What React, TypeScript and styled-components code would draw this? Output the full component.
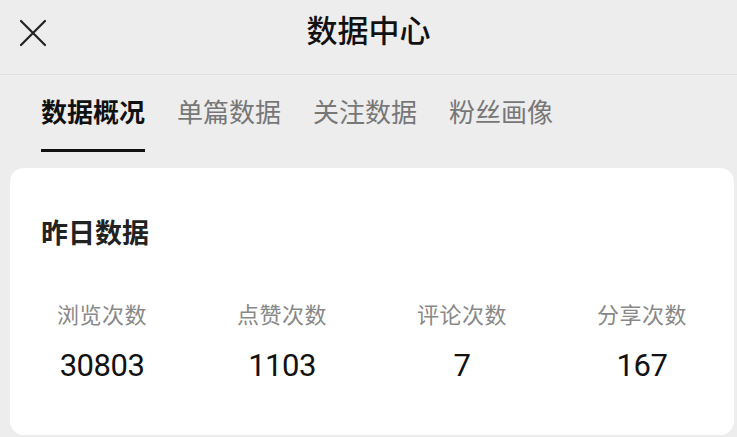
import styled, { createGlobalStyle } from 'styled-components';

const GlobalStyle = createGlobalStyle`
	html, body {
		margin: 0;
		padding: 0;
		background: #ededed;
	}
	body {
		font-family: 'Noto Sans CJK SC', 'Noto Sans', sans-serif;
		width: 737px;
		height: 437px;
		overflow: hidden;
	}
`;

const TABS = ['数据概况', '单篇数据', '关注数据', '粉丝画像'];

const STATS = [
	{ label: '浏览次数', value: '30803' },
	{ label: '点赞次数', value: '1103' },
	{ label: '评论次数', value: '7' },
	{ label: '分享次数', value: '167' },
];

function CloseIcon() {
	return (
		<svg width="28" height="28" viewBox="0 0 28 28" fill="none">
			<path
				d="M2 2L26 26M26 2L2 26"
				stroke="#222"
				strokeWidth="2.2"
				strokeLinecap="round"
			/>
		</svg>
	);
}

export default function App() {
	return (
		<Page>
			<GlobalStyle />
			<Header>
				<CloseButton aria-label="关闭">
					<CloseIcon />
				</CloseButton>
				<Title>数据中心</Title>
				<span />
			</Header>

			<Tabs>
				{TABS.map((t, i) => (
					<Tab key={t}>
						<TabText $active={i === 0}>{t}</TabText>
						<Underline $active={i === 0} />
					</Tab>
				))}
			</Tabs>

			<Card>
				<CardTitle>昨日数据</CardTitle>
				<StatsGrid>
					{STATS.map(s => (
						<Stat key={s.label}>
							<StatLabel>{s.label}</StatLabel>
							<StatValue>{s.value}</StatValue>
						</Stat>
					))}
				</StatsGrid>
			</Card>
		</Page>
	);
}

const Page = styled.div`
	width: 737px;
	height: 437px;
	background: #ededed;
	display: flex;
	flex-direction: column;
`;

const Header = styled.div`
	height: 74px;
	display: grid;
	grid-template-columns: 80px 1fr 80px;
	align-items: center;
	border-bottom: 1px solid #e0e0e0;
`;

const CloseButton = styled.button`
	border: none;
	background: none;
	padding: 0;
	margin: -8px 0 0 19px;
	width: 28px;
	height: 28px;
	display: flex;
	align-items: center;
	justify-content: center;
	cursor: pointer;
`;

const Title = styled.h1`
	margin: -16px 0 0;
	text-align: center;
	font-size: 31px;
	line-height: 40px;
	font-weight: 500;
	color: #111;
`;

const Tabs = styled.div`
	display: flex;
	gap: 32px;
	padding: 18px 0 0 41px;
`;

const Tab = styled.div`
	display: flex;
	flex-direction: column;
	align-items: stretch;
`;

const TabText = styled.span<{ $active: boolean }>`
	font-size: 26px;
	line-height: 36px;
	font-weight: ${p => (p.$active ? 700 : 400)};
	color: ${p => (p.$active ? '#111' : '#777')};
	white-space: nowrap;
`;

const Underline = styled.div<{ $active: boolean }>`
	margin-top: 20px;
	height: 3px;
	background: ${p => (p.$active ? '#111' : 'transparent')};
`;

const Card = styled.div`
	margin: 16px 3px 0 10px;
	height: 267px;
	background: #fff;
	border-radius: 14px;
	box-sizing: border-box;
`;

const CardTitle = styled.h2`
	margin: 0;
	padding: 46px 0 0 31px;
	font-size: 27px;
	line-height: 36px;
	font-weight: 700;
	color: #222;
`;

const StatsGrid = styled.div`
	display: grid;
	grid-template-columns: repeat(4, 1fr);
	margin-top: 48px;
	padding: 0 2px;
`;

const Stat = styled.div`
	display: flex;
	flex-direction: column;
	align-items: center;
`;

const StatLabel = styled.span`
	font-size: 22px;
	line-height: 30px;
	color: #888;
	letter-spacing: 0.5px;
`;

const StatValue = styled.span`
	margin-top: 18px;
	font-family: Roboto, 'Noto Sans', sans-serif;
	font-size: 31px;
	line-height: 40px;
	color: #111;
	letter-spacing: -0.5px;
`;
